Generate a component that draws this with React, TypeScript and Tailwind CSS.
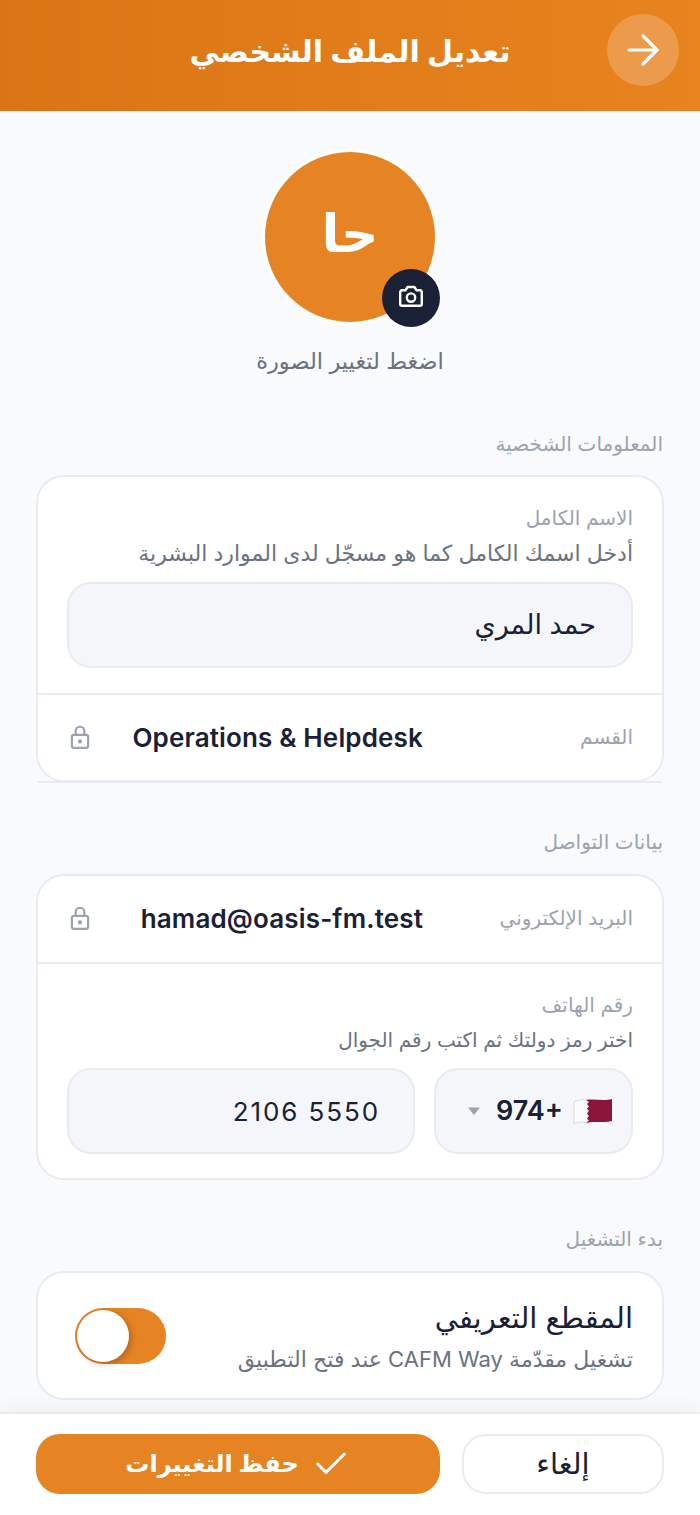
import React from "react";
import { ArrowRight, Check } from "lucide-react";

const font = "font-['Inter','DejaVu_Sans','Noto_Sans',sans-serif]";

function Flag() {
  return (
    <svg width="40" height="26" viewBox="0 0 40 26" className="shrink-0">
      <path d="M1 4 C6 1.5 11 1.5 15 2.5 V25 C10 23.5 6 23.5 1 25.5 Z" fill="#fbfbfb" stroke="#d4d4da" strokeWidth="0.8" />
      <path d="M13 2 L16 4 L14 6 L16 8.5 L14 10.5 L16 13 L14 15.5 L16 18 L14 20.5 L16 22.5 L13 25 C22 22.5 30 25.5 39 23 V1 C30 3.5 22 0.5 13 2 Z" fill="#8a1538" />
    </svg>
  );
}

function CameraGlyph() {
  return (
    <svg className="mb-[3px]" width="26" height="23" viewBox="0 0 26 23" fill="none" stroke="white" strokeWidth="2.4" strokeLinejoin="round">
      <path d="M2.2 7 a1.8 1.8 0 0 1 1.8 -1.8 H7.6 L9.6 2 H16.4 L18.4 5.2 H22 a1.8 1.8 0 0 1 1.8 1.8 V19 a1.8 1.8 0 0 1 -1.8 1.8 H4 a1.8 1.8 0 0 1 -1.8 -1.8 Z" />
      <circle cx="13" cy="12.6" r="4.2" />
    </svg>
  );
}

function SectionLabel({ children, className }: { children: React.ReactNode; className: string }) {
  return <div className={`pr-px text-[20px] leading-[26px] text-[#9ca3af] ${className}`}>{children}</div>;
}

function ReadOnlyRow({ label, value, className }: { label: string; value: string; className: string }) {
  return (
    <div className={`flex items-center px-[29px] ${className}`}>
      <span className="w-[210px] shrink-0 text-[20px] text-[#9ca3af]">{label}</span>
      <span className="text-[26px] font-semibold tracking-[0.15px] text-[#1a2035]" dir="ltr">{value}</span>
      <svg className="mr-auto" width="26" height="26" viewBox="0 0 24 24" fill="none" stroke="#9ca3af" strokeWidth="2" strokeLinecap="round" strokeLinejoin="round">
        <rect x="4.5" y="10" width="15" height="12" rx="2" />
        <path d="M8 10V6.5a4 4 0 0 1 8 0V10" />
        <circle cx="12" cy="16" r="1" fill="#9ca3af" />
      </svg>
    </div>
  );
}

export default function App() {
  return (
    <div dir="rtl" className={`flex h-[1515px] w-[700px] flex-col overflow-hidden bg-[#f8fafc] ${font}`}>
      <header className="relative flex h-[111px] shrink-0 items-center justify-center bg-gradient-to-l from-[#e8841f] to-[#d97514] pb-[9px]">
        <h1 className="text-[30px] font-bold text-white">تعديل الملف الشخصي</h1>
        <button className="absolute right-[21px] top-[14px] flex h-[72px] w-[72px] items-center justify-center rounded-full bg-white/20">
          <ArrowRight className="h-[48px] w-[48px] text-white" strokeWidth={1.6} />
        </button>
      </header>

      <main className="min-h-0 flex-1 overflow-hidden px-[36px]">
        <div className="flex flex-col items-center pt-[38px]">
          <div className="relative h-[176px] w-[176px] rounded-full border-[3px] border-white">
            <div className="flex h-full w-full items-center justify-center rounded-full bg-[#e68323] pb-[6px] text-[52px] font-bold text-white">حا</div>
            <button className="absolute bottom-[-5px] left-[117px] flex h-[58px] w-[58px] items-center justify-center rounded-full bg-[#1a2035]">
              <CameraGlyph />
            </button>
          </div>
          <p className="mt-[20px] text-[22.5px] leading-[32px] text-[#6b7280]">اضغط لتغيير الصورة</p>
        </div>

        <SectionLabel className="mt-[54px]">المعلومات الشخصية</SectionLabel>
        <section className="mt-[18px] h-[307px] rounded-[28px] border-2 border-[#e8ecf1] bg-white">
          <div className="border-b-2 border-[#e8ecf1] px-[29px] pb-[25px] pt-[28px]">
            <div className="text-[20px] leading-[26px] text-[#9ca3af]">الاسم الكامل</div>
            <div className="mt-[8px] text-[22px] leading-[28px] text-[#6b7280]">أدخل اسمك الكامل كما هو مسجّل لدى الموارد البشرية</div>
            <div className="mt-[15px] flex h-[86px] items-center rounded-[24px] border-2 border-[#e8ecf1] bg-[#f4f6fa] px-[35px] text-[27px] text-[#1a2035]">حمد المري</div>
          </div>
          <ReadOnlyRow label="القسم" value="Operations & Helpdesk" className="h-[88px] border-b-2 border-[#e8ecf1] pb-[2px]" />
        </section>

        <SectionLabel className="mt-[47px]">بيانات التواصل</SectionLabel>
        <section className="mt-[19px] h-[306px] rounded-[28px] border-2 border-[#e8ecf1] bg-white">
          <ReadOnlyRow label="البريد الإلكتروني" value="hamad@oasis-fm.test" className="h-[88px] border-b-2 border-[#e8ecf1] pb-[2px]" />
          <div className="px-[29px] pt-[28px]">
            <div className="text-[20px] leading-[26px] text-[#9ca3af]">رقم الهاتف</div>
            <div className="mt-[8px] text-[20px] leading-[28px] text-[#6b7280]">اختر رمز دولتك ثم اكتب رقم الجوال</div>
            <div className="mt-[14px] flex gap-[19px]">
              <div className="flex h-[86px] w-[199px] items-center gap-[10px] rounded-[24px] border-2 border-[#e8ecf1] bg-[#f4f6fa] pr-[18px]">
                <Flag />
                <span className="text-[27px] font-semibold text-[#1a2035]" dir="ltr">974+</span>
                <svg width="14" height="10" viewBox="0 0 14 10" className="mr-[5px]"><path d="M1 1.5 H13 L7 9 Z" fill="#9ca3af" /></svg>
              </div>
              <div className="flex h-[86px] flex-1 items-center rounded-[24px] border-2 border-[#e8ecf1] bg-[#f4f6fa] px-[33px] text-[26px] tracking-[1.9px] text-[#1a2035]">
                <span dir="ltr">2106 5550</span>
              </div>
            </div>
          </div>
        </section>

        <SectionLabel className="mt-[46px]">بدء التشغيل</SectionLabel>
        <section className="mt-[19px] flex h-[129px] items-center justify-between rounded-[28px] border-2 border-[#e8ecf1] bg-white pl-[37px] pr-[29px]">
          <div>
            <div className="text-[29px] leading-[38px] text-[#1a2035]">المقطع التعريفي</div>
            <div className="mt-[8px] text-[22px] leading-[28px] text-[#6b7280]">تشغيل مقدّمة CAFM Way عند فتح التطبيق</div>
          </div>
          <div className="flex h-[56px] w-[91px] items-center justify-end rounded-full bg-[#e68323] pl-[2px]">
            <div className="h-[52px] w-[52px] rounded-full bg-white shadow-[2px_2px_6px_rgba(0,0,0,0.25)]"></div>
          </div>
        </section>
      </main>

      <footer className="flex h-[103px] shrink-0 gap-[22px] border-t-2 border-[#e8ecf1] bg-white px-[36px] pt-[20px] shadow-[0_-6px_16px_rgba(0,0,0,0.04)]">
        <button className="h-[60px] w-[202px] rounded-[24px] border-2 border-[#e8ecf1] bg-white text-[29px] text-[#1a2035]">إلغاء</button>
        <button className="flex h-[60px] flex-1 items-center justify-center gap-[12px] rounded-[24px] bg-[#e68323] text-[24px] font-bold text-white">
          <Check className="h-[40px] w-[40px]" strokeWidth={1.8} />
          حفظ التغييرات
        </button>
      </footer>
    </div>
  );
}
